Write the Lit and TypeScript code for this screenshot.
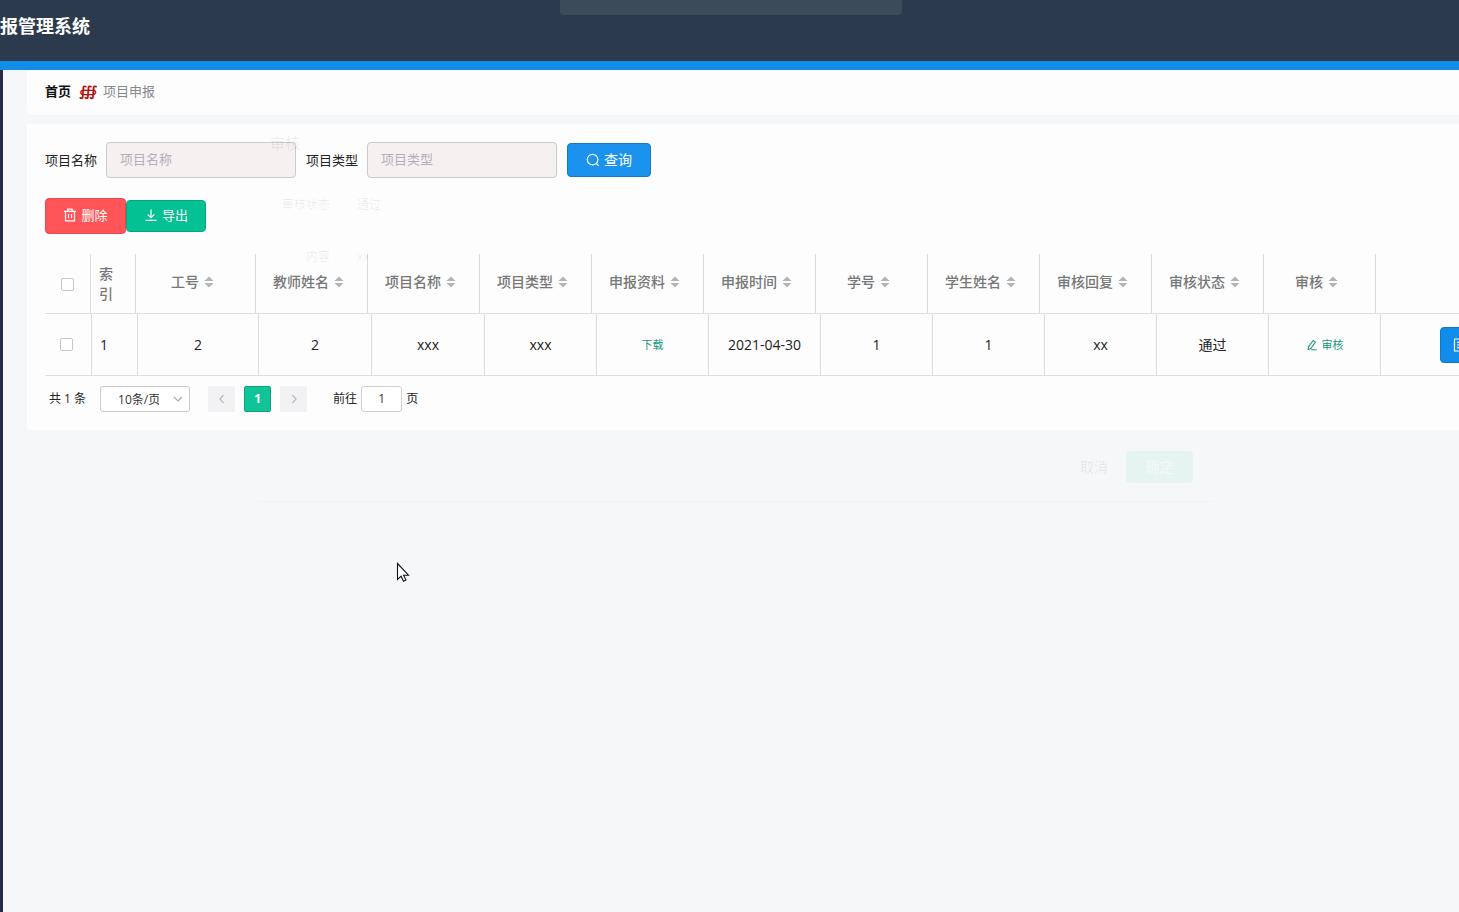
import { LitElement, html, css, svg } from "lit";
import { customElement } from "lit/decorators.js";

interface Column {
  label: string;
  value: string;
  kind?: "download" | "review";
}

const COLUMNS: Column[] = [
  { label: "工号", value: "2" },
  { label: "教师姓名", value: "2" },
  { label: "项目名称", value: "xxx" },
  { label: "项目类型", value: "xxx" },
  { label: "申报资料", value: "下载", kind: "download" },
  { label: "申报时间", value: "2021-04-30" },
  { label: "学号", value: "1" },
  { label: "学生姓名", value: "1" },
  { label: "审核回复", value: "xx" },
  { label: "审核状态", value: "通过" },
  { label: "审核", value: "审核", kind: "review" },
];

const icon = (size: number, body: unknown) => html`
  <svg class="icon" width=${size} height=${size} viewBox="0 0 14 14" aria-hidden="true">${body}</svg>
`;

const searchIcon = icon(14, svg`<circle cx="6.6" cy="6.6" r="5.3"/><path d="M10.4 10.4 12.6 12.8"/>`);
const trashIcon = icon(14, svg`<path d="M1 3.3h12M4.8 3.1V1.2h4.4v1.9M2.5 3.5v9.3h9V3.5M5.5 6v4.2M8.5 6v4.2"/>`);
const downloadIcon = icon(14, svg`<path d="M7 1.5v8M3.6 6.3 7 9.7l3.4-3.4M1.4 12.4h11.2"/>`);
const editIcon = icon(12, svg`<path d="M8.3 1.8 11 3.6 5.6 11.2 2.6 12.3 2.9 9.4ZM6 12.6h6.5"/>`);
const detailIcon = icon(14, svg`<path d="M1.5 1h11v12h-11zM4 4.4h6M4 7h6M4 9.6h6"/>`);
const leftIcon = icon(12, svg`<path d="M8.8 2.6 4.6 7l4.2 4.4"/>`);
const rightIcon = icon(12, svg`<path d="M5.2 2.6 9.4 7l-4.2 4.4"/>`);
const sortIcon = html`
  <svg class="sort" width="10" height="12" viewBox="0 0 10 12" aria-hidden="true">
    <path d="M5 .6 9.6 5H.4zM5 11.4 9.6 7H.4z" />
  </svg>
`;

@customElement("app-root")
export class AppRoot extends LitElement {
  static styles = css`
    :host {
      display: flex;
      flex-direction: column;
      position: relative;
      min-height: 100vh;
      overflow: hidden;
      box-sizing: border-box;
      background: #f6f7f9;
      color: #222;
      font: 13px/20px "Open Sans", "Noto Sans CJK SC", sans-serif;
    }
    * {
      box-sizing: border-box;
    }
    button,
    input,
    select {
      font: inherit;
      margin: 0;
    }
    .icon {
      fill: none;
      stroke: currentColor;
      stroke-width: 1.2;
      flex: none;
    }
    .top {
      height: 70px;
      padding: 11px 0;
      background: #2b3b4d;
      border-bottom: 9px solid #118ce8;
    }
    .title {
      margin: 0;
      color: #fff;
      font-size: 18px;
      line-height: 30px;
      font-weight: 700;
    }
    .main {
      flex: 1;
      display: flex;
      flex-direction: column;
      gap: 9px;
      padding-left: 24px;
      border-left: 3px solid #232c48;
    }
    .crumbs {
      display: flex;
      align-items: center;
      gap: 8px;
      height: 45px;
      padding: 0 18px 3px;
      background: #fdfdfe;
      border-radius: 0 0 0 6px;
      color: #85878c;
    }
    .crumbs a {
      color: #111;
      font-weight: 700;
      text-decoration: none;
    }
    .sep {
      width: 16px;
      color: #b01010;
      font: italic 700 14px/20px "DejaVu Sans", sans-serif;
    }
    .panel {
      padding: 18px 0 18px 18px;
      background: #fdfdfe;
      overflow: hidden;
    }
    .filters {
      display: flex;
      align-items: center;
      gap: 10px;
    }
    .field {
      display: flex;
      align-items: center;
      gap: 9px;
    }
    .field input {
      width: 190px;
      height: 36px;
      padding: 0 13px 2px;
      border: 1px solid #cbc9cf;
      border-radius: 4px;
      background: #f5f1f0;
    }
    .field input::placeholder {
      color: #b3afba;
    }
    .btn {
      display: inline-flex;
      align-items: center;
      justify-content: center;
      gap: 4px;
      border: 1px solid;
      border-radius: 4px;
      color: #fff;
      font-size: 14px;
    }
    .query {
      width: 84px;
      height: 34px;
      background: #1b93ee;
      border-color: #1679c6;
    }
    .remove {
      width: 81px;
      height: 36px;
      background: #ff5458;
      border-color: #e8484e;
    }
    .export {
      width: 80px;
      height: 32px;
      background: #04c193;
      border-color: #06a57e;
    }
    .actions {
      display: flex;
      align-items: center;
      margin: 20px 0;
    }
    .actions .btn {
      padding-bottom: 3px;
      font-size: 13px;
    }
    table,
    thead,
    tbody {
      display: block;
    }
    table {
      font-size: 14px;
    }
    tr {
      display: grid;
      width: max-content;
      border-bottom: 1px solid #dfdfe2;
    }
    thead tr {
      height: 60px;
      grid-template-columns: 46px 45px 120px repeat(10, 112px) 360px;
    }
    tbody tr {
      height: 62px;
      grid-template-columns: 47px 46px 121px 113px 113px repeat(8, 112px) 355px;
    }
    th,
    td {
      display: flex;
      align-items: center;
      justify-content: center;
      gap: 5px;
      padding: 0;
      border-right: 1px solid #dcdce0;
    }
    th {
      padding: 0 6px 4px 0;
      color: #777;
      font-weight: 500;
    }
    th.pick {
      padding: 2px 0 0;
    }
    td.pick {
      padding-right: 4px;
    }
    .index {
      justify-content: flex-start;
      padding: 0 22px 0 8px;
    }
    td.index {
      padding-right: 8px;
    }
    .pick input {
      appearance: none;
      width: 13px;
      height: 13px;
      margin: 0;
      border: 1px solid #c6c7cb;
      border-radius: 2px;
      background: #fff;
    }
    .sort {
      fill: #b4b4b6;
    }
    .link {
      display: inline-flex;
      align-items: center;
      gap: 4px;
      padding: 0;
      border: 0;
      background: none;
      color: #16997b;
      font-size: 11px;
      text-decoration: none;
    }
    td.ops {
      justify-content: flex-start;
      padding-left: 59px;
    }
    .detail {
      justify-content: flex-start;
      width: 81px;
      height: 36px;
      padding: 0 12px;
      background: #118ce8;
      border-color: #0f78c8;
    }
    .pager {
      display: flex;
      align-items: center;
      margin-top: 10px;
      padding-left: 4px;
      font-size: 12px;
      line-height: 26px;
    }
    .size {
      position: relative;
      margin: 0 18px 0 14px;
      color: #aaa;
    }
    .size select {
      appearance: none;
      display: block;
      width: 90px;
      height: 26px;
      padding: 0 30px 0 17px;
      border: 1px solid #c9cace;
      border-radius: 3px;
      background: #fff;
      color: #333;
    }
    .size .icon {
      position: absolute;
      right: 7px;
      top: 8px;
      pointer-events: none;
    }
    .pages {
      display: flex;
      gap: 9px;
      margin-right: 26px;
    }
    .page {
      display: flex;
      align-items: center;
      justify-content: center;
      width: 27px;
      height: 26px;
      padding: 0;
      border: 0;
      border-radius: 2px;
      background: #f2f2f5;
      color: #aaa;
    }
    .page.on {
      background: #10c497;
      border: 1px solid #0ba37d;
      color: #fff;
      font-weight: 700;
    }
    .jump {
      display: flex;
      align-items: center;
      gap: 4px;
    }
    .jump input {
      width: 41px;
      height: 26px;
      padding: 0;
      border: 1px solid #cfcfd4;
      border-radius: 3px;
      background: #fff;
      color: #333;
      text-align: center;
    }
    .toast {
      position: absolute;
      top: 0;
      left: 560px;
      width: 342px;
      height: 15px;
      border-radius: 0 0 4px 4px;
      background: #3b4b5a;
    }
    .dialog {
      position: absolute;
      top: 124px;
      left: 258px;
      width: 954px;
      height: 378px;
      display: flex;
      flex-direction: column;
      padding: 9px 19px 18px 12px;
      border-bottom: 1px solid rgba(0, 0, 0, 0.02);
      color: rgba(0, 0, 0, 0.08);
      pointer-events: none;
    }
    .dialog h2 {
      margin: 0 0 42px;
      font-size: 15px;
      font-weight: 400;
      line-height: 20px;
    }
    .dialog dl {
      display: grid;
      grid-template-columns: 60px 1fr;
      gap: 32px 27px;
      margin: 0;
      font-size: 12px;
    }
    .dialog dt {
      text-align: right;
    }
    .dialog dd {
      margin: 0;
    }
    .foot {
      display: flex;
      justify-content: flex-end;
      align-items: center;
      gap: 18px;
      margin-top: auto;
    }
    .foot button {
      border: 0;
      padding: 0;
      background: none;
      color: inherit;
      font-size: 14px;
    }
    .foot .ok {
      width: 67px;
      height: 32px;
      border-radius: 4px;
      background: #e6f4f1;
      color: #f2faf8;
    }
    .pointer {
      position: absolute;
      left: 396px;
      top: 562px;
    }
  `;

  private cell(column: Column) {
    if (column.kind === "download") return html`<a class="link" href="#">${column.value}</a>`;
    if (column.kind === "review")
      return html`<button class="link" type="button">${editIcon}${column.value}</button>`;
    return column.value;
  }

  render() {
    return html`
      <header class="top"><h1 class="title">报管理系统</h1></header>
      <main class="main">
        <nav class="crumbs" aria-label="面包屑">
          <a href="#">首页</a><span class="sep">∰</span><span>项目申报</span>
        </nav>
        <section class="panel">
          <form class="filters">
            <div class="field">
              <label for="name">项目名称</label>
              <input id="name" type="text" placeholder="项目名称" />
            </div>
            <div class="field">
              <label for="type">项目类型</label>
              <input id="type" type="text" placeholder="项目类型" />
            </div>
            <button class="btn query" type="button">${searchIcon}查询</button>
          </form>
          <div class="actions">
            <button class="btn remove" type="button">${trashIcon}删除</button>
            <button class="btn export" type="button">${downloadIcon}导出</button>
          </div>
          <table>
            <thead>
              <tr>
                <th class="pick"><input type="checkbox" aria-label="全选" /></th>
                <th class="index">索引</th>
                ${COLUMNS.map((c) => html`<th>${c.label}${sortIcon}</th>`)}
                <th></th>
              </tr>
            </thead>
            <tbody>
              <tr>
                <td class="pick"><input type="checkbox" aria-label="选择第 1 行" /></td>
                <td class="index">1</td>
                ${COLUMNS.map((c) => html`<td>${this.cell(c)}</td>`)}
                <td class="ops">
                  <button class="btn detail" type="button" aria-label="详情">${detailIcon}</button>
                </td>
              </tr>
            </tbody>
          </table>
          <div class="pager">
            <span>共 1 条</span>
            <div class="size">
              <select aria-label="每页条数">
                <option>10条/页</option>
              </select>
              <svg class="icon" width="10" height="10" viewBox="0 0 10 10" aria-hidden="true">
                <path d="M1 3l4 4 4-4" />
              </svg>
            </div>
            <div class="pages">
              <button class="page" type="button" aria-label="上一页">${leftIcon}</button>
              <button class="page on" type="button">1</button>
              <button class="page" type="button" aria-label="下一页">${rightIcon}</button>
            </div>
            <label class="jump">前往<input type="text" .value=${"1"} />页</label>
          </div>
        </section>
      </main>
      <div class="toast"></div>
      <div class="dialog">
        <h2>审核</h2>
        <dl>
          <dt>审核状态</dt>
          <dd>通过</dd>
          <dt>内容</dt>
          <dd>xx</dd>
        </dl>
        <div class="foot">
          <button type="button">取消</button>
          <button class="ok" type="button">确定</button>
        </div>
      </div>
      <svg class="pointer" width="14" height="22" viewBox="0 0 14 22" aria-hidden="true">
        <path
          d="M1.5 1.5v16l3.6-3.3 2.4 5 2.4-1.1-2.3-4.9h4.9z"
          fill="#fff"
          stroke="#111"
          stroke-width="1.1"
        />
      </svg>
    `;
  }
}
